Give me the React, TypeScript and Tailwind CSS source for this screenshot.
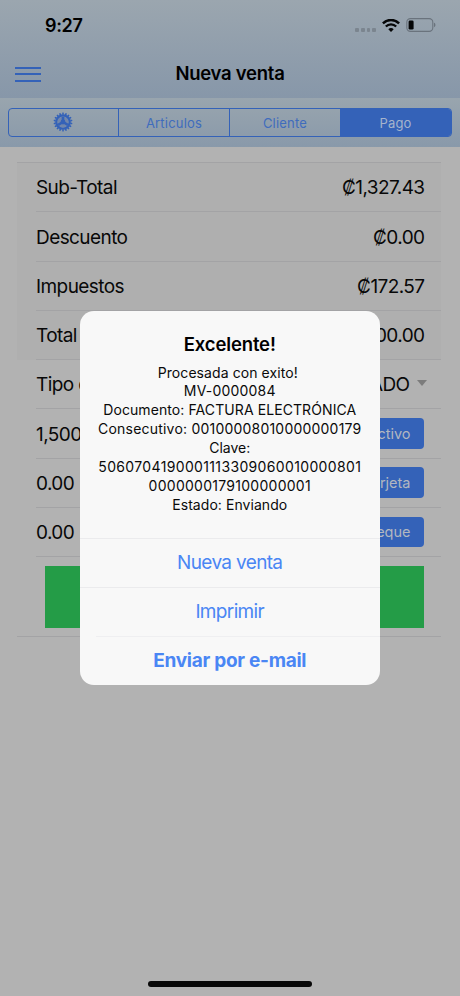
import type { ReactNode } from "react";

function StatusBar() {
  return (
    <div className="flex h-[50px] items-center justify-between pl-[45px] pr-[24px] pt-px">
      <span className="text-[18px] font-semibold tracking-[-0.35px] text-black">9:27</span>
      <div className="flex items-center pb-px">
        <div className="mr-[6px] mt-[10px] flex gap-[1.8px]">
          {[0, 1, 2, 3].map((n) => (
            <i key={n} className="size-[3.8px] rounded-[1px] bg-[#7b858f]" />
          ))}
        </div>
        <svg className="mr-[6px]" width="18" height="13" viewBox="0 0 18 13" fill="none" stroke="#050607">
          <path d="M.9 4.4C5.5-.2 12.5-.2 17.1 4.4" strokeWidth="2.4" />
          <path d="M3.8 7.5c2.9-2.9 7.5-2.9 10.4 0" strokeWidth="2.3" />
          <path d="M6.3 10.2c1.5-1.5 3.9-1.5 5.4 0L9 12.9z" fill="#050607" stroke="none" />
        </svg>
        <svg width="30" height="14" viewBox="0 0 30 14" fill="none">
          <rect x=".8" y=".6" width="26" height="12.8" rx="3.6" stroke="#6a737d" strokeWidth="1.1" />
          <rect x="2.6" y="2.4" width="5" height="9.2" rx="1.4" fill="#050607" />
          <path d="M28 4.8c1.9.5 1.9 3.9 0 4.4z" fill="#6a737d" />
        </svg>
      </div>
    </div>
  );
}

const teeth = Array.from({ length: 18 }, (_, n) => n * 20);

function GearIcon() {
  return (
    <svg className="mb-px mr-px" width="20" height="20" viewBox="-10 -10 20 20" fill="none" stroke="#3462b8">
      {teeth.map((angle) => (
        <path key={angle} d="M-1-7.4L-.6-9.4H.6L1-7.4z" fill="#3462b8" stroke="none" transform={`rotate(${angle})`} />
      ))}
      <circle r="6.6" strokeWidth="2.4" />
      <circle r="5.6" fill="#7187ac" stroke="none" />
      <path d="M0 0V-5.5M0 0L4.8 2.8M0 0L-4.8 2.8" strokeWidth="2.6" />
      <circle r="2.4" fill="#3462b8" stroke="none" />
    </svg>
  );
}

function Row({ label, children }: { label: string; children: ReactNode }) {
  return (
    <div className="ml-[19px] flex h-[49.25px] items-center justify-between border-b border-[#a3a3a5] pr-[17px] text-[19px] tracking-[-0.58px] text-[#080808]">
      <span className="pt-[3px]">{label}</span>
      {children}
    </div>
  );
}

function Amount({ value }: { value: string }) {
  return <span className="-mr-[0.5px] pt-[3px]">{value}</span>;
}

function PayButton({ text }: { text: string }) {
  return (
    <span className="flex h-[30.5px] w-[82px] items-center justify-end rounded-[4px] bg-[#3462b8] pr-[13.5px] text-[14.5px] tracking-[0px] text-[#b2b7c0]">
      {text}
    </span>
  );
}

export default function App() {
  return (
    <div className="relative h-[996px] w-[460px] overflow-hidden bg-[#b2b2b2] font-['Inter','Liberation_Sans',sans-serif]">
      <header className="h-[98px] bg-linear-to-b from-[#9ba6af] to-[#8797a9]">
        <StatusBar />
        <div className="flex h-[48px] items-center px-[15px]">
          <div className="flex w-[26px] flex-col gap-[4.5px]">
            <i className="h-[2px] bg-[#3462b8]" />
            <i className="h-[2px] bg-[#3462b8]" />
            <i className="h-[2px] bg-[#3462b8]" />
          </div>
          <h1 className="flex-1 pr-[26px] text-center text-[18.5px] font-semibold tracking-[-0.25px] text-black">Nueva venta</h1>
        </div>
      </header>
      <nav className="h-[49px] bg-linear-to-b from-[#99a5ae] to-[#8999aa] px-[8px] pt-[10px]">
        <div className="grid h-[29px] grid-cols-[110px_111px_110px_1fr] overflow-hidden rounded-[4px] border border-[#3462b8] text-[13px] tracking-[0.2px] text-[#3f6cbd]">
          <span className="flex items-center justify-center border-r border-[#3462b8]">
            <GearIcon />
          </span>
          <span className="flex items-center justify-center border-r border-[#3462b8] pt-[3px]">Articulos</span>
          <span className="flex items-center justify-center pt-[3px]">Cliente</span>
          <span className="flex items-center justify-center bg-[#3462b8] pt-[3px] text-[#a5b4cc]">Pago</span>
        </div>
      </nav>
      <main className="pl-[17px] pr-[19px] pt-[15px]">
        <div className="border-t border-[#a3a3a5] bg-[#afafaf]">
          <Row label="Sub-Total"><Amount value="₡1,327.43" /></Row>
          <Row label="Descuento"><Amount value="₡0.00" /></Row>
          <Row label="Impuestos"><Amount value="₡172.57" /></Row>
          <Row label="Total"><Amount value="₡1,500.00" /></Row>
        </div>
        <Row label="Tipo de pago">
          <span className="-mr-[3px] flex items-center gap-[7.5px] pt-[3px]">
            CONTADO
            <i className="mb-[5px] border-x-[5.5px] border-t-[6px] border-x-transparent border-t-[#7c7c7c]" />
          </span>
        </Row>
        <Row label="1,500.00"><PayButton text="Efectivo" /></Row>
        <Row label="0.00"><PayButton text="Tarjeta" /></Row>
        <Row label="0.00"><PayButton text="Cheque" /></Row>
        <div className="h-[80px] border-b border-[#a3a3a5] pl-[28px] pr-[17px] pt-[9px]">
          <div className="h-[62px] bg-[#249c47]" />
        </div>
      </main>
      <div className="absolute bottom-[9px] left-[148px] h-[6px] w-[164px] rounded-full bg-[#080808]" />
      <section className="absolute left-[80px] top-[311px] flex h-[373.5px] w-[299.5px] flex-col overflow-hidden rounded-[14px] bg-[#f8f8f8] text-center">
        <div className="h-[227px] pt-[20px]">
          <h2 className="text-[18.5px] font-semibold leading-[27px] tracking-[-0.15px] text-black">Excelente!</h2>
          <div className="mt-[5.5px] whitespace-nowrap text-[14px] leading-[18.9px] text-[#0a0a0a]">
            <p className="pr-[4px] tracking-[0.08px]">Procesada con exito!</p>
            <p className="tracking-[0.2px]">MV-0000084</p>
            <p className="tracking-[0.09px]">Documento: FACTURA ELECTRÓNICA</p>
            <p className="tracking-[0.21px]">Consecutivo: 00100008010000000179</p>
            <p>Clave:</p>
            <p className="tracking-[0.35px]">5060704190001113309060010000801</p>
            <p className="tracking-[0.27px]">0000000179100000001</p>
            <p className="tracking-[0.06px]">Estado: Enviando</p>
          </div>
        </div>
        <div className="flex flex-1 flex-col text-[19px] tracking-[-0.65px] text-[#4a86f4]">
          <button className="h-[49px] border-t border-[#ebebed] pt-px">Nueva venta</button>
          <button className="h-[49px] border-t border-[#ebebed] pt-px">Imprimir</button>
          <button className="ml-[16px] h-[48px] border-t border-[#efeff1] pr-[16px] pt-[2px] font-bold tracking-[-0.27px]">Enviar por e-mail</button>
        </div>
      </section>
    </div>
  );
}
